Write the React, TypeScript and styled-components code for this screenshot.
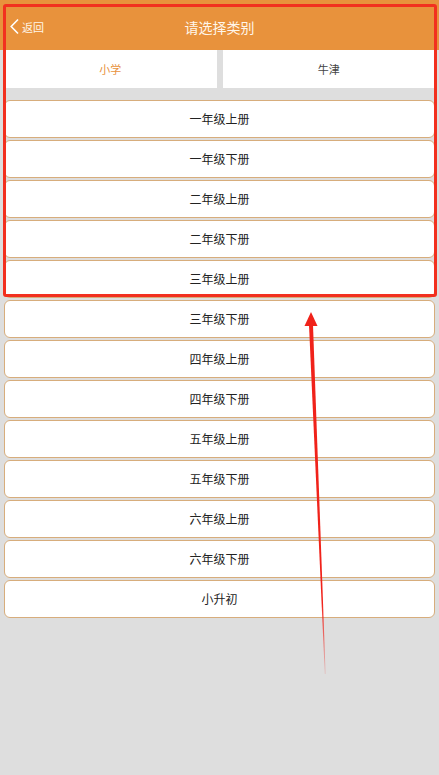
import React from "react";
import styled, { createGlobalStyle } from "styled-components";

const GlobalStyle = createGlobalStyle`
  html, body {
    margin: 0;
    padding: 0;
    background: #dedede;
    font-family: "Noto Sans CJK SC", "Noto Sans", sans-serif;
  }
`;

const grades = [
  "一年级上册",
  "一年级下册",
  "二年级上册",
  "二年级下册",
  "三年级上册",
  "三年级下册",
  "四年级上册",
  "四年级下册",
  "五年级上册",
  "五年级下册",
  "六年级上册",
  "六年级下册",
  "小升初",
];

const App: React.FC = () => {
  return (
    <Page>
      <GlobalStyle />
      <Header>
        <Back>
          <svg width="11" height="17" viewBox="0 0 11 17">
            <path d="M9 1.5 L2.2 8.5 L9 15.5" fill="none" stroke="#fff" strokeWidth="1.6" />
          </svg>
          <span>返回</span>
        </Back>
        <Title>请选择类别</Title>
      </Header>
      <Tabs>
        <Tab active>小学</Tab>
        <Tab>牛津</Tab>
      </Tabs>
      <List>
        {grades.map((g) => (
          <Item key={g}>{g}</Item>
        ))}
      </List>
      <Highlight />
      <Arrow width="439" height="775" viewBox="0 0 439 775">
        <defs>
          <linearGradient id="shaft" x1="0" y1="313" x2="0" y2="675" gradientUnits="userSpaceOnUse">
            <stop offset="0" stopColor="#f0221a" />
            <stop offset="0.8" stopColor="#f0221a" />
            <stop offset="1" stopColor="#f0221a" stopOpacity="0.15" />
          </linearGradient>
        </defs>
        <polygon points="311,312 304.5,326 317.5,326" fill="#f0221a" />
        <polygon points="309,325 313,325 325.6,674 324.8,674" fill="url(#shaft)" />
      </Arrow>
    </Page>
  );
};
export default App;

const Page = styled.div`
  position: relative;
  width: 439px;
  height: 775px;
  background: #dedede;
  overflow: hidden;
`;

const Header = styled.div`
  position: relative;
  height: 50px;
  background: #e8923c;
  display: flex;
  align-items: center;
  justify-content: center;
`;

const Back = styled.div`
  position: absolute;
  left: 9px;
  top: 18px;
  display: flex;
  align-items: center;
  gap: 2px;
  color: #fff6ea;
  font-size: 11px;
`;

const Title = styled.div`
  color: #fff6ea;
  font-size: 14px;
  margin-top: 3px;
`;

const Tabs = styled.div`
  display: flex;
  gap: 6px;
  padding: 0 4px;
  height: 38px;
`;

const Tab = styled.div<{ active?: boolean }>`
  flex: 1;
  background: #fff;
  display: flex;
  align-items: center;
  justify-content: center;
  padding-bottom: 1px;
  font-size: 11px;
  color: ${(p) => (p.active ? "#e8923c" : "#444")};
`;

const List = styled.div`
  display: flex;
  flex-direction: column;
  gap: 2px;
  padding: 12px 4px 0;
`;

const Item = styled.div`
  box-sizing: border-box;
  height: 38px;
  padding-bottom: 2px;
  background: #fff;
  border: 1px solid #d7ad7c;
  border-radius: 6px;
  display: flex;
  align-items: center;
  justify-content: center;
  font-size: 12px;
  color: #222;
`;

const Highlight = styled.div`
  position: absolute;
  left: 3px;
  top: 4px;
  width: 428px;
  height: 287px;
  border: 3px solid #f2301f;
  border-radius: 3px;
  pointer-events: none;
`;

const Arrow = styled.svg`
  position: absolute;
  left: 0;
  top: 0;
  pointer-events: none;
`;
